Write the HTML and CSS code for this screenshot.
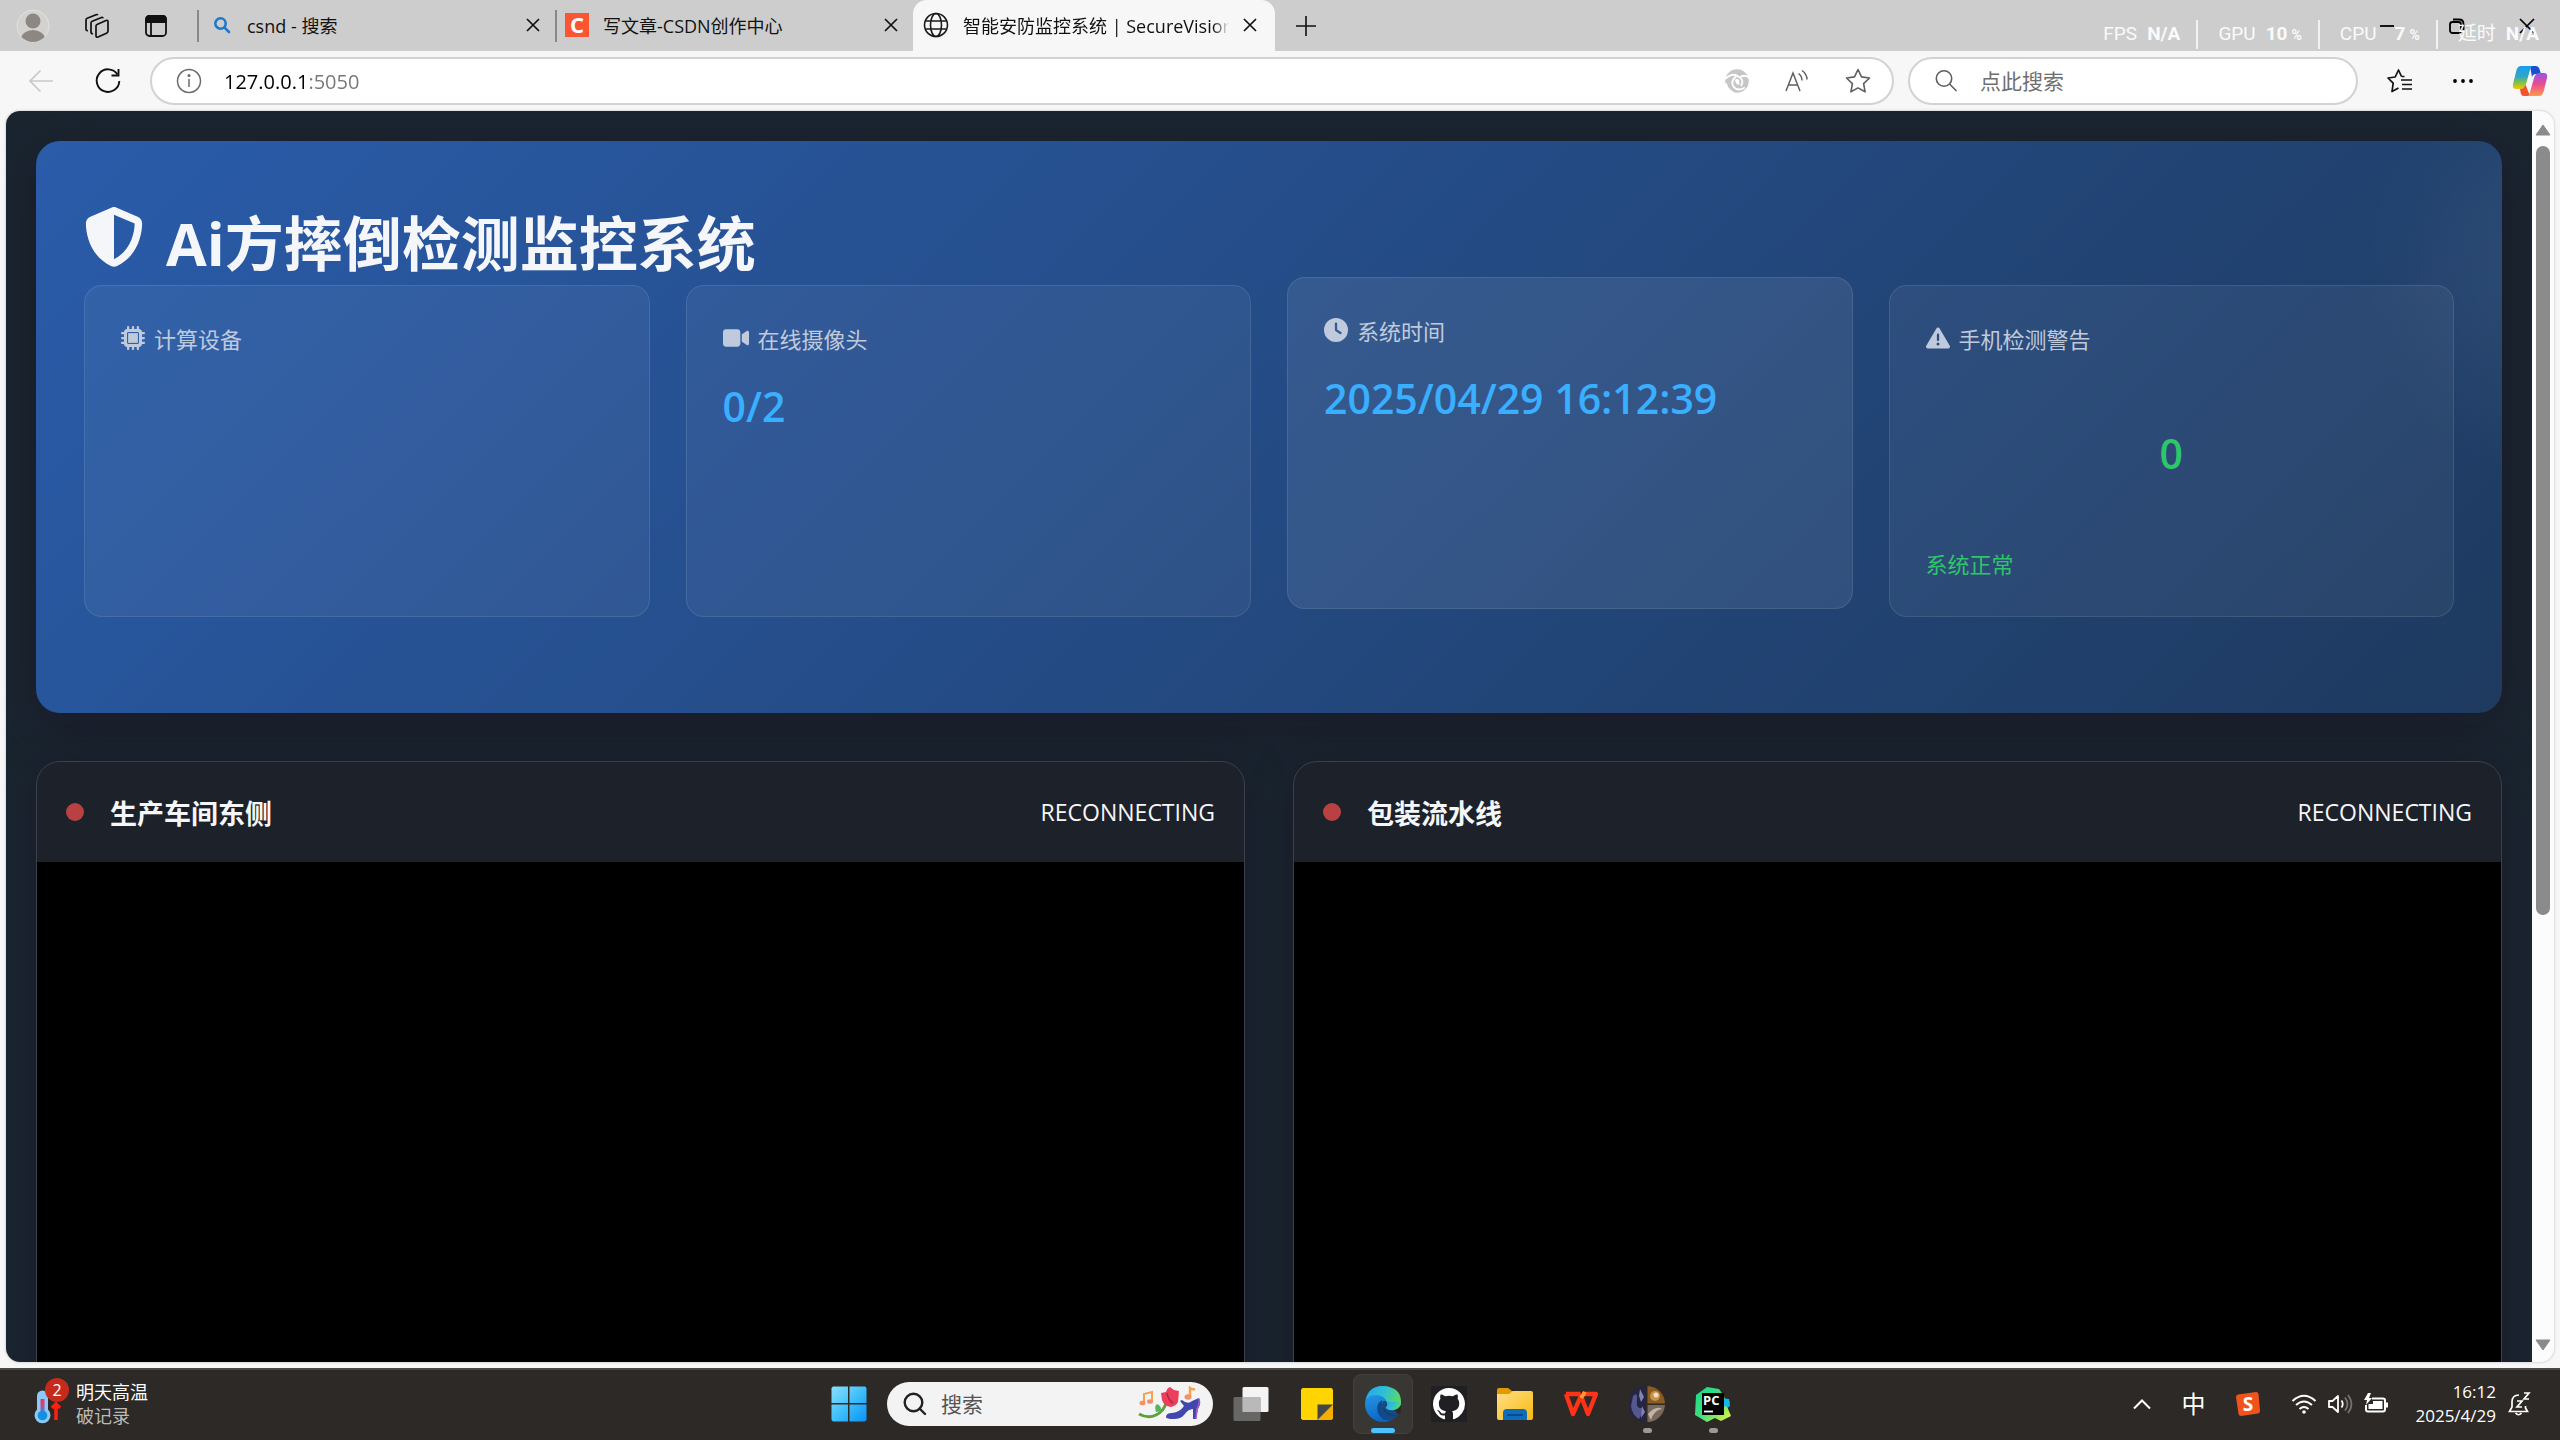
FILE: index.html
```html
<!DOCTYPE html>
<html lang="zh-CN">
<head>
<meta charset="utf-8">
<title>智能安防监控系统 | SecureVision</title>
<link rel="stylesheet" href="styles.css">
</head>
<body>
<div class="browser">
  <header class="tabbar">
    <div class="tab-tools">
      <button class="icon-btn" aria-label="个人资料"><svg width="34" height="34" viewBox="0 0 34 34"><defs><clipPath id="av"><circle cx="17" cy="17" r="16"/></clipPath></defs><circle cx="17" cy="17" r="16" fill="#d4d2ce" stroke="#e4e2df"/><g clip-path="url(#av)" fill="#8c8783"><circle cx="17" cy="12" r="7.5"/><ellipse cx="17" cy="30" rx="12" ry="9"/></g></svg></button>
      <button class="icon-btn" aria-label="工作区"><svg width="26" height="26" viewBox="0 0 26 26" fill="none" stroke="#111" stroke-width="1.7" stroke-linejoin="round"><path d="M13 11.5 22 7.500q2-.8 2 1.200V18q0 1.500-1.500 2.200L14 24q-2 .8-2-1.200V13q0-1 1-1.500z"/><path d="M9 20.500q-2 .6-2-1.400V10q0-1.200 1.200-1.700L17.500 4.500q1.300-.5 1.500.8"/><path d="M4 17.500q-2 .4-2-1.500V7q0-1.200 1.200-1.700L12 1.800q1.400-.5 1.700.5"/></svg></button>
      <button class="icon-btn" aria-label="标签页操作"><svg width="24" height="24" viewBox="0 0 24 24" fill="none" stroke="#111" stroke-width="1.8"><rect x="2" y="2" width="20" height="20" rx="3.500"/><path d="M2 5.500Q2 2 5.500 2h13Q22 2 22 5.500V8H2z" fill="#111"/><path d="M7 8v14"/></svg></button>
    </div>
    <div class="tab first">
      <svg class="fav" width="18" height="18" viewBox="0 0 18 18" fill="none" stroke="#1a78d0" stroke-width="2.600"><circle cx="7.500" cy="7.500" r="5.200"/><path d="M11.300 11.300 16 16" stroke-linecap="round"/></svg>
      <span class="tab-title">csnd - 搜索</span>
      <button class="close" aria-label="关闭"><svg width="14" height="14" viewBox="0 0 14 14"><path d="M1 1 13 13M13 1 1 13"/></svg></button>
    </div>
    <div class="tab">
      <svg class="fav" width="24" height="24" viewBox="0 0 24 24"><rect width="24" height="24" fill="#fc5531"/><text x="12" y="20" text-anchor="middle" class="csdn">C</text></svg>
      <span class="tab-title">写文章-CSDN创作中心</span>
      <button class="close" aria-label="关闭"><svg width="14" height="14" viewBox="0 0 14 14"><path d="M1 1 13 13M13 1 1 13"/></svg></button>
    </div>
    <div class="tab active">
      <svg class="fav" width="26" height="26" viewBox="0 0 26 26" fill="none" stroke="#1b1b1b" stroke-width="1.600"><circle cx="13" cy="13" r="11.500"/><ellipse cx="13" cy="13" rx="5.500" ry="11.500"/><path d="M2.500 9h21M2.500 17h21"/></svg>
      <span class="tab-title">智能安防监控系统 | SecureVision Pro</span>
      <button class="close" aria-label="关闭"><svg width="14" height="14" viewBox="0 0 14 14"><path d="M1 1 13 13M13 1 1 13"/></svg></button>
    </div>
    <button class="newtab" aria-label="新建标签页"><svg width="22" height="22" viewBox="0 0 22 22" stroke="#111" stroke-width="1.600"><path d="M11 1v20M1 11h20"/></svg></button>
    <div class="win-controls">
      <button aria-label="最小化"><svg width="16" height="16" viewBox="0 0 16 16"><path d="M1 8h14" stroke="#000" stroke-width="1.800"/></svg></button>
      <button aria-label="还原"><svg width="16" height="16" viewBox="0 0 16 16" fill="none" stroke="#000" stroke-width="1.800"><rect x="1" y="4" width="11" height="11" rx="2.500"/><path d="M4 1.500h6Q14.500 1.500 14.500 6v6"/></svg></button>
      <button aria-label="关闭窗口"><svg width="16" height="16" viewBox="0 0 16 16" stroke="#000" stroke-width="1.700"><path d="M1 1 15 15M15 1 1 15"/></svg></button>
    </div>
    <div class="perf">
      <span>FPS <b>N/A</b></span><span>GPU <b>10<small>%</small></b></span><span>CPU <b class="cpu">7<small>%</small></b></span><span>延时 <b>N/A</b></span>
    </div>
  </header>

  <div class="toolbar">
    <button class="icon-btn back" aria-label="返回"><svg width="26" height="24" viewBox="0 0 26 24" fill="none" stroke="#c9c9c9" stroke-width="1.700"><path d="M25 12H2M12.500 1.500 2 12l10.500 10.500"/></svg></button>
    <button class="icon-btn" aria-label="刷新"><svg width="28" height="28" viewBox="0 0 28 28" fill="none" stroke="#111" stroke-width="1.900"><path d="M23.500 7.500A11.300 11.300 0 1 0 25.300 14"/><path d="M24.500 2v6.500H17.500"/></svg></button>
    <div class="address">
      <svg width="26" height="26" viewBox="0 0 26 26" fill="none" stroke="#6b6b6b" stroke-width="1.500"><circle cx="13" cy="13" r="11.500"/><path d="M13 11v8"/><circle cx="13" cy="7.500" r=".8" fill="#6b6b6b"/></svg>
      <input class="url" type="text" value="127.0.0.1:5050" aria-label="地址栏">
      <button class="icon-btn" aria-label="网站权限"><svg width="26" height="26" viewBox="0 0 26 26"><circle cx="13" cy="13" r="11.800" fill="#c6c6c6"/><g fill="none" stroke="#fff" stroke-width="1.800"><path d="M1 11Q9 4 14 8.500q7 3 3 9.500"/><path d="M25 10q-3-4-9-1"/><path d="M12 8.500Q6 13 9.500 18.500T21 19.500"/><path d="M2 15.500q1 6 7 9"/></g><path d="M11 11.500q5-2 4.500 5-4 1-4.500-5z" fill="#fff"/></svg></button>
      <button class="icon-btn" aria-label="朗读"><svg width="26" height="26" viewBox="0 0 26 26" fill="none" stroke="#5f5f5f" stroke-width="1.500"><path d="M2 23 9 5l7 18M4.500 17h9M14.500 5.500Q18 8 18 12.500M18 2.500q5 3.500 5 9"/></svg></button>
      <button class="icon-btn" aria-label="收藏"><svg width="28" height="28" viewBox="0 0 28 28" fill="none" stroke="#5f5f5f" stroke-width="1.600" stroke-linejoin="round"><path d="m14 2.500 3.500 7.400 8 1.100-5.900 5.700 1.500 8.100L14 20.900l-7.100 3.900 1.500-8.100L2.500 11l8-1.100z"/></svg></button>
    </div>
    <div class="search">
      <svg width="24" height="24" viewBox="0 0 24 24" fill="none" stroke="#5f5f5f" stroke-width="1.600"><circle cx="10" cy="9.500" r="7.700"/><path d="m15.500 15 7 7"/></svg>
      <input type="search" placeholder="点此搜索" aria-label="搜索">
    </div>
    <div class="bar-end">
      <button class="icon-btn" aria-label="收藏夹"><svg width="28" height="28" viewBox="0 0 28 28" fill="none" stroke="#111" stroke-width="1.700" stroke-linejoin="round"><path d="M15.500 9.500 12.500 3 9.200 10 2 11l5.200 5.200L6 24.500l6.500-3.500"/><path d="M15.500 9.500h3M15 13h11M16 17.500h10M16 22h10"/></svg></button>
      <button class="icon-btn" aria-label="更多"><svg width="22" height="6" viewBox="0 0 22 6"><circle cx="3" cy="3" r="1.900"/><circle cx="11" cy="3" r="1.900"/><circle cx="19" cy="3" r="1.900"/></svg></button>
      <button class="icon-btn" aria-label="Copilot"><svg width="36" height="34" viewBox="0 0 36 34"><defs><linearGradient id="c1" x1="0" y1="0" x2="0" y2="1"><stop offset="0" stop-color="#1a9df0"/><stop offset=".45" stop-color="#2fa6c8"/><stop offset=".7" stop-color="#7cc04a"/><stop offset="1" stop-color="#f7c600"/></linearGradient><linearGradient id="c2" x1="0" y1="0" x2="0" y2="1"><stop offset="0" stop-color="#9a52e8"/><stop offset=".5" stop-color="#e8508f"/><stop offset="1" stop-color="#ff9a4a"/></linearGradient></defs><path d="M18 2h6q2.500 0 3.300 2.500L29 10h-5q-3 0-4 3z" fill="#1a4fcf"/><path d="M9 2h12q-2 0-3 4l-4 14q-1.500 5-5.500 5H4q-4 0-3-5L4.500 6Q5.800 2 9 2z" fill="url(#c1)"/><path d="M18 32h-6q-2.500 0-3.200-2.500L8 25q4 0 5.500-4.500z" fill="#f2542f"/><path d="M27 32H15q2 0 3-4l4-14q1.500-5 5.500-5H32q4 0 3 5l-3.500 14Q30.200 32 27 32z" fill="url(#c2)"/></svg></button>
    </div>
  </div>

  <div class="viewport">
    <main class="page">
      <section class="hero">
        <h1><svg width="60" height="60" viewBox="0 0 512 512" fill="currentColor"><path d="M256 0c4.600 0 9.200 1 13.400 2.900L457.700 82.800c22 9.300 38.400 31 38.300 57.200c-.5 99.200-41.300 280.700-213.600 363.200c-16.700 8-36.100 8-52.800 0C57.300 420.700 16.500 239.200 16 140c-.1-26.200 16.300-47.900 38.300-57.200L242.700 2.900C246.800 1 251.400 0 256 0zm0 66.800V444.800C394 378 431.100 230.100 432 141.400L256 66.800z"/></svg><span>Ai方摔倒检测监控系统</span></h1>
        <div class="stats">
          <article class="stat">
            <h2><svg width="24" height="24" viewBox="0 0 512 512" fill="currentColor"><path fill-rule="evenodd" d="M176 24c0-13.300-10.700-24-24-24s-24 10.700-24 24V64c-35.300 0-64 28.700-64 64H24c-13.300 0-24 10.700-24 24s10.700 24 24 24H64v56H24c-13.300 0-24 10.700-24 24s10.700 24 24 24H64v56H24c-13.300 0-24 10.700-24 24s10.700 24 24 24H64c0 35.300 28.700 64 64 64v40c0 13.300 10.700 24 24 24s24-10.700 24-24V448h56v40c0 13.300 10.700 24 24 24s24-10.700 24-24V448h56v40c0 13.300 10.700 24 24 24s24-10.700 24-24V448c35.300 0 64-28.700 64-64h40c13.300 0 24-10.700 24-24s-10.700-24-24-24H448V280h40c13.300 0 24-10.700 24-24s-10.700-24-24-24H448V176h40c13.300 0 24-10.700 24-24s-10.700-24-24-24H448c0-35.300-28.700-64-64-64V24c0-13.300-10.700-24-24-24s-24 10.700-24 24V64H280V24c0-13.300-10.700-24-24-24s-24 10.700-24 24V64H176V24zM160 128H352c17.700 0 32 14.300 32 32V352c0 17.700-14.300 32-32 32H160c-17.700 0-32-14.300-32-32V160c0-17.700 14.300-32 32-32z"/><path d="M152 152H360V360H152z"/></svg>计算设备</h2>
          </article>
          <article class="stat">
            <h2><svg width="26" height="24" viewBox="0 0 576 512" fill="currentColor"><path d="M0 128C0 92.700 28.700 64 64 64H320c35.300 0 64 28.700 64 64V384c0 35.300-28.700 64-64 64H64c-35.300 0-64-28.700-64-64V128zM559.100 99.800c10.400 5.600 16.900 16.400 16.900 28.200V384c0 11.800-6.500 22.600-16.900 28.200s-23 5-32.900-1.600l-96-64L416 337.100V174.900l14.200-9.500 96-64c9.800-6.500 22.400-7.200 32.900-1.600z"/></svg>在线摄像头</h2>
            <p class="value">0/2</p>
          </article>
          <article class="stat hover">
            <h2><svg width="24" height="24" viewBox="0 0 512 512" fill="currentColor"><path d="M256 0a256 256 0 1 1 0 512A256 256 0 1 1 256 0zM232 120V256c0 8 4 15.500 10.700 20l96 64c11 7.400 25.900 4.400 33.300-6.700s4.400-25.900-6.700-33.300L280 243.200V120c0-13.300-10.700-24-24-24s-24 10.700-24 24z"/></svg>系统时间</h2>
            <p class="value">2025/04/29 16:12:39</p>
          </article>
          <article class="stat alert">
            <h2><svg width="24" height="24" viewBox="0 0 512 512" fill="currentColor"><path d="M256 32c14.200 0 27.300 7.500 34.500 19.800l216 368c7.300 12.400 7.300 27.700 .2 40.100S486.300 480 472 480H40c-14.300 0-27.600-7.700-34.700-20.100s-7-27.800 .2-40.100l216-368C228.700 39.500 241.800 32 256 32zm0 128c-13.300 0-24 10.700-24 24V296c0 13.300 10.700 24 24 24s24-10.700 24-24V184c0-13.300-10.700-24-24-24zm32 224a32 32 0 1 0 -64 0 32 32 0 1 0 64 0z"/></svg>手机检测警告</h2>
            <p class="value">0</p>
            <p class="status">系统正常</p>
          </article>
        </div>
      </section>
      <section class="cameras">
        <article class="camera">
          <header><i class="dot"></i><h3>生产车间东侧</h3><span>RECONNECTING</span></header>
          <div class="video"></div>
        </article>
        <article class="camera">
          <header><i class="dot"></i><h3>包装流水线</h3><span>RECONNECTING</span></header>
          <div class="video"></div>
        </article>
      </section>
    </main>
    <div class="scrollbar">
      <svg width="16" height="12" viewBox="0 0 16 12"><path d="M8 1 15 11H1z" fill="#8a8a8a" stroke="#8a8a8a" stroke-linejoin="round"/></svg>
      <div class="track"><div class="thumb"></div></div>
      <svg width="16" height="12" viewBox="0 0 16 12"><path d="M8 11 1 1h14z" fill="#8a8a8a" stroke="#8a8a8a" stroke-linejoin="round"/></svg>
    </div>
  </div>
</div>

<footer class="taskbar">
  <button class="weather">
    <span class="thermo"><svg width="36" height="44" viewBox="0 0 36 44"><defs><linearGradient id="th" x1="0" y1="0" x2="0" y2="1"><stop offset="0" stop-color="#f0325a"/><stop offset=".5" stop-color="#c04a90"/><stop offset="1" stop-color="#1a8fe0"/></linearGradient></defs><path d="M3 14a5.500 5.500 0 0 1 11 0v13.500a8 8 0 1 1-11 0z" fill="#8cc8f8"/><path d="M6.500 17h4v14h-4z" fill="url(#th)"/><circle cx="8.500" cy="33.500" r="4.800" fill="#1490e0"/><path d="M22 38V24M18 26l4-4 4 4" stroke="#ff2010" stroke-width="3.500" fill="none"/></svg><b class="badge">2</b></span>
    <span class="weather-text">明天高温<br><small>破记录</small></span>
  </button>
  <div class="apps">
    <button class="app" aria-label="开始"><svg width="36" height="36" viewBox="0 0 36 36"><defs><linearGradient id="w" x1="0" y1="0" x2="1" y2="1"><stop offset="0" stop-color="#8be0ff"/><stop offset=".5" stop-color="#3fc0fa"/><stop offset="1" stop-color="#0a90f5"/></linearGradient></defs><path d="M2 .5h15v16.500H.5V2zM18.500.5H34L35.500 2v15h-17zM.5 18.500H17v17H2L.5 34zM18.500 18.500h17V34L34 35.500H18.500z" fill="url(#w)"/></svg></button>
    <div class="task-search">
      <svg width="24" height="24" viewBox="0 0 24 24" fill="none" stroke="#222" stroke-width="2.400"><circle cx="10.500" cy="10.500" r="8.800"/><path d="m16.500 16.500 5.500 5.500" stroke-linecap="round"/></svg>
      <input type="search" placeholder="搜索" aria-label="任务栏搜索">
      <svg class="art" width="64" height="36" viewBox="0 0 64 36"><g fill="none" stroke="#f6a050" stroke-width="2"><path d="M6 17V8l8-2v9"/><path d="M52 10V2q2 2 5 1" stroke-width="2.400"/></g><g fill="#f49068"><ellipse cx="4.500" cy="17" rx="3" ry="2.300"/><ellipse cx="12" cy="15.500" rx="3" ry="2.300"/><ellipse cx="50" cy="11" rx="3.500" ry="2.700"/></g><path d="M1 28q9 5 17 1t10-12" fill="none" stroke="#5fa03c" stroke-width="3"/><path d="M18 26q-2-6 1-8 5 2 4 7z" fill="#58b45a"/><path d="M23 7l5-1q1-4 4-5l4 3 5 1-1 11q-2 4-7 5-7-1-9-7z" fill="#ec3f5c"/><path d="M29 7q1 7 6 10" stroke="#b41f48" stroke-width="1.500" fill="none"/><path d="M28 31q0-4 6-4 8-1 12-7l-4-5 2-1q6 5 10 1l7-3q3 4-1 11l-2 10h-3v-10q-5 0-9 6-3 4-10 4-8 0-8-2z" fill="#4048b0"/><path d="M61 13q1 5-2 10l-1 10" stroke="#a860c8" stroke-width="1.500" fill="none"/></svg>
    </div>
    <button class="app" aria-label="任务视图"><svg width="36" height="36" viewBox="0 0 36 36"><rect x="9.500" y="1" width="26" height="25" rx="1.500" fill="#f4f4f4"/><rect x=".5" y="11" width="27" height="24" rx="1.500" fill="#777" fill-opacity=".8"/><path d="M9.500 11h18v15h-18z" fill="#b9b9b9"/></svg></button>
    <button class="app" aria-label="便笺"><svg width="34" height="34" viewBox="0 0 34 34"><path d="M2.500 1h29L33 2.500V18L17.500 33h-15L1 31.500v-29z" fill="#ffd400"/><path d="M17.500 17.500H33L17.500 33z" fill="#454545"/><path d="M33 17.500v14L31.500 33h-14z" fill="#f5ae00"/></svg></button>
    <button class="app current" aria-label="Edge"><svg width="36" height="36" viewBox="0 0 36 36"><defs><linearGradient id="e1" x1="0" y1=".3" x2="1" y2=".6"><stop offset="0" stop-color="#25a8ee"/><stop offset=".5" stop-color="#30c2d0"/><stop offset="1" stop-color="#5fdc55"/></linearGradient><linearGradient id="e2" x1="0" y1="0" x2=".3" y2="1"><stop offset="0" stop-color="#2ea4ec"/><stop offset="1" stop-color="#0b66c4"/></linearGradient></defs><circle cx="18" cy="18" r="18" fill="url(#e2)"/><path d="M1 14Q3 0 18 0q18 1 18 16 0 8-9 8-5 0-6.500-2.500Q23 19 22 16 19 9 11 9 4 9 1 14z" fill="url(#e1)"/><path d="M17 14q-7 5-4 13 4 9 13 7 5-2 9-7-6 3-12 0-7-4-6-13z" fill="#114a8b"/><path d="M21 15q3 4-.5 6.500Q23 25 29 24l7-5v8l-3 1q-6 3-11-.5-6-4.500-4-12z" fill="#2c2a27"/><path d="M33 28q-6 2.500-11-1-6-5-4-12l3 .5q2 3-.5 6Q23 25 29 24z" fill="#114a8b"/><path d="M21 15.500q3 3.500-.5 6Q23 25 29 24q7-1.500 7-8z" fill="url(#e1)"/></svg></button>
    <button class="app" aria-label="GitHub"><svg width="36" height="36" viewBox="0 0 36 36"><rect width="36" height="36" fill="#201f24"/><path transform="translate(2 2)scale(2)" fill="#fff" d="M8 0C3.580 0 0 3.580 0 8c0 3.540 2.290 6.530 5.470 7.590.4.070.55-.17.55-.38 0-.19-.01-.82-.01-1.490-2.010.37-2.530-.49-2.690-.94-.09-.23-.48-.94-.82-1.130-.28-.15-.68-.52-.01-.53.63-.01 1.080.58 1.230.82.72 1.210 1.870.87 2.330.66.070-.52.28-.87.510-1.070-1.780-.2-3.640-.89-3.640-3.950 0-.87.310-1.590.82-2.150-.08-.2-.36-1.020.08-2.120 0 0 .67-.21 2.200.82.64-.18 1.320-.27 2-.27s1.360.09 2 .27c1.530-1.040 2.200-.82 2.200-.82.44 1.100.16 1.920.08 2.120.51.56.82 1.270.82 2.150 0 3.070-1.870 3.750-3.650 3.950.29.25.54.73.54 1.480 0 1.070-.01 1.930-.01 2.200 0 .21.15.46.55.38A8.010 8.010 0 0 0 16 8c0-4.420-3.580-8-8-8z"/></svg></button>
    <button class="app" aria-label="文件资源管理器"><svg width="36" height="36" viewBox="0 0 36 36"><defs><linearGradient id="fo" x1="0" y1="0" x2="1" y2="1"><stop offset="0" stop-color="#ffe08a"/><stop offset="1" stop-color="#f8b90c"/></linearGradient></defs><path d="M0 4q0-2 2-2h9l4 3H30v6H0z" fill="#e29a00"/><path d="M0 8h12l4-3h18q2 0 2 2v25q0 2-2 2H2q-2 0-2-2z" fill="url(#fo)"/><path d="M6 34V27q0-4 4-4h16q4 0 4 4v7z" fill="#0f6cbd"/><path d="M11 29h14" stroke="#0a4a86" stroke-width="2" stroke-linecap="round"/></svg></button>
    <button class="app" aria-label="WPS"><svg width="36" height="36" viewBox="0 0 36 36"><path d="M3 8h14.500M3 8l7 20 8-18 7 18 8-20H19" fill="none" stroke="#ff3318" stroke-width="4.400" stroke-linejoin="round"/><path d="m18 12 4-6" stroke="#ff9a30" stroke-width="4"/></svg></button>
    <button class="app open" aria-label="图库"><svg width="36" height="36" viewBox="0 0 36 36"><path d="M17 0A18 18 0 0 0 17 36z" fill="#252442"/><path d="M4 10q5-5 4 4t4 8-2 11Q3 29 2 20z" fill="#54588c"/><path d="m11 3 4 8-3 5-2-6zM13 20l3 6-4 6z" fill="#8084b8"/><path d="M18.500 0A18 18 0 0 1 36 17.500H18.500z" fill="#8a5c22"/><circle cx="26" cy="10" r="5" fill="#c7934a"/><circle cx="27" cy="9" r="2.500" fill="#f4ddc8"/><path d="M18.500 19H36A18 18 0 0 1 18.500 36z" fill="#79695c"/><path d="M19 28q8-9 14-5-8 1-11 11z" fill="#c4b3a4"/></svg></button>
    <button class="app open" aria-label="PyCharm"><svg width="36" height="36" viewBox="0 0 36 36"><defs><linearGradient id="p1" x1="0" y1="0" x2="1" y2="1"><stop offset="0" stop-color="#18d88a"/><stop offset=".5" stop-color="#40e07c"/><stop offset="1" stop-color="#f4f43c"/></linearGradient></defs><path d="M26 12 34 13 35 20 28 24z" fill="#12b8e8"/><path d="M1 9 12 1 24 3 29 10 31 18 36 30 26 35 20 32 12 36 0 29z" fill="url(#p1)"/><path d="M28 12 35 16 33 21 28 20z" fill="#12b8e8"/><rect x="7" y="7" width="22" height="22" fill="#000"/><text x="8" y="19" class="pc">PC</text><path d="M9 25.500h9" stroke="#fff" stroke-width="1.800"/></svg></button>
  </div>
  <div class="tray">
    <button aria-label="显示隐藏的图标"><svg width="18" height="12" viewBox="0 0 18 12" fill="none" stroke="#fff" stroke-width="2"><path d="m1 10.500 8-8 8 8"/></svg></button>
    <button class="ime">中</button>
    <button aria-label="搜狗输入法"><svg width="26" height="26" viewBox="0 0 26 26"><path d="M1 6q0-2 2-2.500L21 1q2 0 2.500 2L25 20q0 2-2 2.500L6 25q-2 0-2.500-2z" fill="#f0541c"/><text x="13" y="20" text-anchor="middle" class="sogou">S</text></svg></button>
    <button class="net" aria-label="网络、音量和电池">
      <svg width="26" height="24" viewBox="0 0 26 24" fill="none" stroke="#fff" stroke-width="2"><path d="M1.500 9Q13-1.500 24.500 9M5 13q8-7 16 0M8.500 17q4.500-4 9 0"/><circle cx="13" cy="20" r="1.800" fill="#fff" stroke="none"/></svg>
      <svg width="26" height="24" viewBox="0 0 26 24" fill="none" stroke="#fff" stroke-width="1.800"><path d="M2 9h3.500L11 4v16l-5.500-5H2z" stroke-linejoin="round"/><path d="M14.500 8.500q2.500 3.500 0 7"/><path d="M18 5.500q5 6.500 0 13M21 3q7 9 0 18" stroke="#77736f"/></svg>
      <svg width="26" height="24" viewBox="0 0 26 24"><path d="M9 6.500h11q2 0 2 2v9q0 2-2 2H5q-2 0-2-2V13" fill="none" stroke="#fff" stroke-width="2"/><path d="M10 9h9.500v8h-14V12H10zM23 10.500h2v5h-2zM5 1 1 8h3l-1 5 6-7H6l2-5z" fill="#fff"/></svg>
    </button>
    <div class="clock-group">
      <button class="clock">16:12<br>2025/4/29</button>
      <button aria-label="通知"><svg width="24" height="26" viewBox="0 0 24 26" fill="none" stroke="#fff" stroke-width="1.700"><path d="M12 4Q5 4 5 11v5l-2.500 4.500h18L18.500 17v-2M8.500 22q3 3.500 6 0M10 10h5l-5 6h5M17 2h5l-5 6h5"/></svg></button>
    </div>
  </div>
</footer>
</body>
</html>
```
FILE: styles.css
```css
* { box-sizing: border-box; margin: 0; }

body {
  display: flex;
  flex-direction: column;
  height: 100vh;
  overflow: hidden;
  background: #f7f7f7;
  color: #111;
  font-family: "Open Sans", "Noto Sans CJK SC", sans-serif;
  font-size: 18px;
}

button {
  display: flex;
  align-items: center;
  justify-content: center;
  padding: 0;
  border: 0;
  background: none;
  color: inherit;
  font: inherit;
}

svg { flex: none; }

input {
  min-width: 0;
  flex: 1;
  padding: 0;
  border: 0;
  outline: 0;
  background: none;
  font: inherit;
}

/* Browser window */
.browser {
  display: flex;
  flex: 1;
  flex-direction: column;
  min-height: 0;
}

.tabbar {
  position: relative;
  display: flex;
  height: 51px;
  background: #cdcdcd;
}

.tab-tools {
  display: flex;
  align-items: center;
  gap: 34px;
  width: 197px;
  padding-left: 16px;
}

.tab {
  display: flex;
  align-items: center;
  gap: 14px;
  flex: 0 1 358px;
  min-width: 0;
  padding: 0 15px 2px 8px;
  border-left: 2px solid transparent;
  border-image: linear-gradient(transparent 11px, #888 11px, #888 41px, transparent 41px) 1;
}

.tab.first { gap: 16px; padding-left: 14px; }

.tab.active {
  flex-basis: 362px;
  border: 0;
  border-radius: 14px 14px 0 0;
  background: #f7f7f7;
  padding: 0 18px 2px 10px;
}

.tab-title {
  flex: 1;
  overflow: hidden;
  white-space: nowrap;
}

.active .tab-title { mask-image: linear-gradient(90deg, #000 94%, transparent); }

.close svg { stroke: #111; stroke-width: 1.7; }

.newtab { width: 62px; }

.win-controls {
  display: flex;
  align-items: center;
  gap: 54px;
  margin-left: auto;
  padding-right: 25px;
}

.perf {
  position: absolute;
  right: 13px;
  bottom: 2px;
  display: flex;
  color: #fafafa;
  font-family: "Roboto", "Noto Sans CJK SC", sans-serif;
  font-size: 19px;
  line-height: 28px;
}

.perf span {
  display: flex;
  align-items: baseline;
  gap: 10px;
  padding: 0 16px 0 20px;
  border-right: 2px solid #f2f2f2;
}

.perf span:last-child { padding-right: 8px; border: 0; }
.perf small { margin-left: 4px; font-size: 14px; }
.perf .cpu { padding-left: 8px; }

.toolbar {
  display: flex;
  align-items: center;
  height: 60px;
  padding: 0 12px 0 28px;
}

.toolbar .back { margin-right: 40px; }

.address,
.search {
  display: flex;
  align-items: center;
  height: 48px;
  border: 2px solid #d2d2d2;
  border-radius: 24px;
  background: #fff;
}

.address {
  flex: 1;
  gap: 34px;
  margin-left: 28px;
  padding: 0 20px 0 24px;
  font-size: 20px;
}

.url {
  margin-left: -12px;
  background: linear-gradient(90deg, #000 82px, #767676 82px);
  background-clip: text;
  -webkit-background-clip: text;
  color: transparent;
}

.search {
  gap: 22px;
  width: 450px;
  margin-left: 14px;
  padding: 0 24px;
  font-size: 21px;
}

.search input::placeholder { color: #6f6f6f; }

.bar-end {
  display: flex;
  align-items: center;
  gap: 38px;
  margin-left: 28px;
}

.viewport {
  display: flex;
  flex: 1;
  min-height: 0;
  margin: 0 6px 6px;
  overflow: hidden;
  border-radius: 14px;
  background: #fcfcfc;
  box-shadow: 0 0 3px #bbb;
}

.page {
  flex: 1;
  padding: 30px;
  overflow: hidden;
  background: #1a2530;
  color: #f5f6fa;
}

.scrollbar {
  display: flex;
  flex-direction: column;
  align-items: center;
  width: 22px;
  padding: 13px 0 11px;
}

.track { flex: 1; width: 14px; padding: 10px 0; }
.thumb { height: 65%; border-radius: 7px; background: #8b8b8b; }

/* Dashboard */
.hero {
  padding: 48px;
  border-radius: 24px;
  background:
    radial-gradient(circle 220px at calc(100% + 80px) 130px, rgba(255, 255, 255, 0.08), transparent),
    linear-gradient(135deg, #2a5caa 0%, #1e3a5f 100%);
  box-shadow: 0 12px 48px rgba(26, 26, 40, 0.9);
}

h1 {
  display: flex;
  align-items: center;
  gap: 22px;
  height: 96px;
  font-size: 59px;
  font-weight: 700;
}

h1 span { padding-top: 6px; }

.stats {
  display: grid;
  grid-template-columns: repeat(4, 1fr);
  gap: 36px;
  margin-bottom: 48px;
}

.stat {
  display: flex;
  flex-direction: column;
  min-height: 332px;
  padding: 36px 36px 35px;
  border: 1px solid rgba(255, 255, 255, 0.1);
  border-radius: 18px;
  background: rgba(255, 255, 255, 0.05);
}

.stat.hover {
  background: rgba(255, 255, 255, 0.08);
  transform: translateY(-8px);
}

.stat h2 {
  display: flex;
  align-items: center;
  gap: 9px;
  color: #c0cadd;
  font-size: 22px;
  font-weight: 400;
  line-height: 35px;
}

.stat h2 svg { margin-bottom: 4px; }

.value {
  margin-top: 14px;
  color: #3aaeff;
  font-size: 41px;
  font-weight: 600;
  line-height: 70px;
}

.alert .value { margin: auto; color: #2ec56b; }
.status { color: #2ec56b; font-size: 22px; line-height: 33px; }

.cameras {
  display: grid;
  grid-template-columns: repeat(2, 1fr);
  gap: 48px;
  margin-top: 48px;
}

.camera {
  overflow: hidden;
  border: 1px solid #3a414c;
  border-radius: 24px;
  background: #1d2129;
  box-shadow: 0 6px 36px rgba(26, 26, 40, 0.9);
}

.camera header {
  display: flex;
  align-items: center;
  gap: 26px;
  height: 100px;
  padding: 0 29px;
  font-size: 23px;
}

.camera h3 { flex: 1; font-size: 27px; }
.dot { width: 18px; height: 18px; border-radius: 50%; background: #ba4141; }
.video { aspect-ratio: 16 / 9; background: #000; }

/* Taskbar */
.taskbar {
  display: grid;
  grid-template-columns: 1fr auto 1fr;
  align-items: center;
  height: 72px;
  padding: 0 0 2px 2px;
  border-top: 2px solid #4b4946;
  background: #2c2926;
  color: #fff;
}

.weather { justify-self: start; gap: 6px; padding-left: 32px; text-align: left; line-height: 24px; }
.weather small { color: #bdbbb9; font-size: 18px; }
.thermo { position: relative; height: 44px; }

.badge {
  position: absolute;
  top: -4px;
  left: 11px;
  width: 24px;
  border-radius: 50%;
  background: #c42b1c;
  font-size: 16px;
  font-weight: 400;
  text-align: center;
}

.apps { display: flex; align-items: center; gap: 6px; }

.app {
  position: relative;
  width: 60px;
  height: 60px;
  border: 1px solid transparent;
  border-radius: 8px;
}

.current { border-color: #434140; background: #393734; }

.current::after,
.open::after {
  content: "";
  position: absolute;
  bottom: 0;
  width: 9px;
  height: 5px;
  border-radius: 3px;
  background: #9c9a98;
}

.current::after { width: 24px; background: #4cc2ff; }

.task-search {
  display: flex;
  align-items: center;
  gap: 14px;
  width: 326px;
  height: 44px;
  margin: 0 2px;
  padding: 0 11px 0 16px;
  border-radius: 22px;
  background: #f3f3f3;
  font-size: 21px;
}

.task-search input::placeholder { color: #555; }

.tray { display: flex; align-items: center; justify-self: end; gap: 30px; padding-right: 29px; }
.ime { font-size: 24px; line-height: 28px; }
.net { gap: 10px; margin-right: -4px; }
.clock-group { display: flex; align-items: center; gap: 11px; }
.clock { text-align: right; line-height: 24px; font-size: 17px; }

.csdn, .pc, .sogou { fill: #fff; font-weight: 700; }
.csdn { font-size: 22px; }
.pc { font-size: 13px; }
.sogou { font-size: 19px; }
```
